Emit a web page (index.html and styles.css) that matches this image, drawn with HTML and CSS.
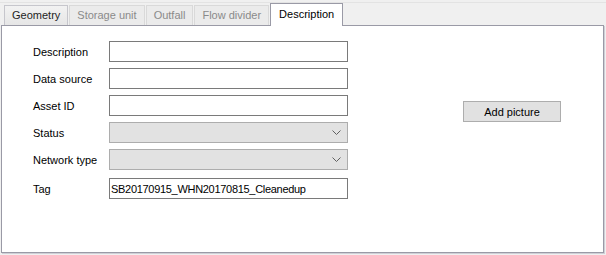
FILE: index.html
```html
<!DOCTYPE html>
<html>
<head>
<meta charset="utf-8">
<link rel="stylesheet" href="styles.css">
</head>
<body>
<div class="window">
  <div class="tabstrip">
    <div class="tab tab-hot">Geometry</div>
    <div class="tab tab-disabled">Storage unit</div>
    <div class="tab tab-disabled">Outfall</div>
    <div class="tab tab-disabled">Flow divider</div>
    <div class="tab tab-active">Description</div>
  </div>
  <div class="panel">
    <div class="form">
      <div class="row"><label class="lbl">Description</label><div class="field text"></div></div>
      <div class="row"><label class="lbl">Data source</label><div class="field text"></div></div>
      <div class="row"><label class="lbl">Asset ID</label><div class="field text"></div></div>
      <div class="row"><label class="lbl">Status</label><div class="field combo"><svg class="chev" width="9" height="5" viewBox="0 0 9 5"><path d="M0.5 0.5 L4.5 4.5 L8.5 0.5" fill="none" stroke="#606060" stroke-width="1"/></svg></div></div>
      <div class="row"><label class="lbl">Network type</label><div class="field combo"><svg class="chev" width="9" height="5" viewBox="0 0 9 5"><path d="M0.5 0.5 L4.5 4.5 L8.5 0.5" fill="none" stroke="#606060" stroke-width="1"/></svg></div></div>
      <div class="row row-tag"><label class="lbl">Tag</label><div class="field text"><span class="value">SB20170915_WHN20170815_Cleanedup</span></div></div>
    </div>
    <div class="side">
      <button class="btn">Add picture</button>
    </div>
  </div>
</div>
</body>
</html>
```

FILE: styles.css
```css
html, body {
  margin: 0;
  padding: 0;
  background: #f0f0f0;
  width: 606px;
  height: 255px;
  overflow: hidden;
  font-family: "Liberation Sans", Arial, sans-serif;
  font-size: 11px;
  color: #000;
}

.window {
  padding-top: 2px;
  border-top: 1px solid #e3e3e3;
  margin-top: 2px;
}

.tabstrip {
  display: flex;
  align-items: flex-end;
  padding-left: 4px;
  height: 20px;
  position: relative;
  z-index: 1;
}

.tab {
  box-sizing: border-box;
  height: 20px;
  line-height: 19px;
  padding: 0 7px;
  border: 1px solid #d9d9d9;
  border-bottom: none;
  margin-right: 1px;
  background: #ebebeb;
  color: #8a8a8a;
}

.tab-hot {
  background: linear-gradient(#f2f2f2, #e6e6e6);
  border-color: #c6c6cc;
  color: #1e1e1e;
}

.tab-active {
  height: 23px;
  margin-bottom: -1px;
  background: #fff;
  border-color: #9a9aa6;
  color: #000;
  padding: 0 8px;
  line-height: 21px;
}

.panel {
  box-sizing: border-box;
  margin-left: 1px;
  width: 603px;
  height: 228px;
  background: #fff;
  border: 1px solid #9a9aa6;
  box-shadow: 1px 1px 0 #cfcfd6;
  display: flex;
  padding-top: 15px;
}

.form {
  display: flex;
  flex-direction: column;
  gap: 6px;
  padding-left: 31px;
}

.row {
  display: flex;
  align-items: center;
  height: 21px;
}

.row-tag {
  margin-top: 2px;
}

.lbl {
  width: 76px;
  color: #000;
}

.field {
  box-sizing: border-box;
  width: 239px;
  height: 21px;
  display: flex;
  align-items: center;
}

.text {
  border: 1px solid #7a7a7a;
  background: #fff;
}

.combo {
  border: 1px solid #adadad;
  background: #e2e2e2;
  justify-content: flex-end;
}

.chev {
  margin-right: 6px;
}

.value {
  padding-left: 1px;
  letter-spacing: -0.3px;
}

.side {
  padding-left: 115px;
  padding-top: 60px;
}

.btn {
  box-sizing: border-box;
  width: 98px;
  height: 21px;
  background: #e1e1e1;
  border: 1px solid #adadad;
  font-family: "Liberation Sans", Arial, sans-serif;
  font-size: 11px;
  color: #000;
  padding: 0;
}
```
